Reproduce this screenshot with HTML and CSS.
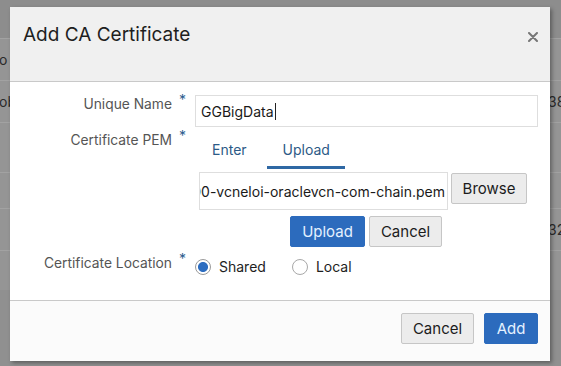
FILE: index.html
```html
<!DOCTYPE html>
<html lang="en">
<head>
  <meta charset="UTF-8" />
  <title>Add CA Certificate</title>
  <link rel="stylesheet" href="styles.css">
</head>
<body>

<!-- table behind the overlay -->
<div class="backdrop">
  <div class="bg-head"></div>
  <div class="bg-row r1"><span class="cell-l">o</span><span class="cell-r white"></span></div>
  <div class="bg-row r2"><span class="cell-l">ob</span><span class="cell-r">38</span></div>
  <div class="bg-row r3"><span class="cell-l"></span><span class="cell-r"></span></div>
  <div class="bg-row r4"><span class="cell-l"></span><span class="cell-r"></span></div>
  <div class="bg-row r5"><span class="cell-l"></span><span class="cell-r">32</span></div>
  <div class="bg-row r6"><span class="cell-l"></span><span class="cell-r"></span></div>
</div>

<!-- DIALOG -->
<div class="dialog">
  <div class="dlg-head">
    <h1 class="dlg-title">Add CA Certificate</h1>
    <svg class="close" width="10" height="10" viewBox="0 0 10 10">
      <path d="M1 1L9 9M9 1L1 9" stroke="#767676" stroke-width="2" stroke-linecap="round"/>
    </svg>
  </div>

  <div class="dlg-body">
    <div class="form">
      <label class="lbl">Unique Name<span class="req">*</span></label>
      <div class="field"><span class="input-val">GGBigData</span><span class="caret"></span></div>

      <label class="lbl">Certificate PEM<span class="req">*</span></label>
      <div class="pem">
        <div class="tabs">
          <span class="tab first">Enter</span>
          <span class="tab active">Upload</span>
        </div>
        <div class="file-row">
          <div class="file-name"><span>00-vcneloi-oraclevcn-com-chain.pem</span></div>
          <button class="btn">Browse</button>
        </div>
        <div class="upload-actions">
          <button class="btn primary">Upload</button>
          <button class="btn">Cancel</button>
        </div>
      </div>

      <label class="lbl loc">Certificate Location<span class="req">*</span></label>
      <div class="radios">
        <span class="radio-opt"><span class="radio on"></span>Shared</span>
        <span class="radio-opt"><span class="radio"></span>Local</span>
      </div>
    </div>
  </div>

  <div class="dlg-foot">
    <button class="btn foot-cancel">Cancel</button>
    <button class="btn primary foot-add">Add</button>
  </div>
</div>

</body>
</html>
```

FILE: styles.css
```css
*{box-sizing:border-box}

body {
  margin:0;
  height:366px;
  overflow:hidden;
  position:relative;
  background:#909090;
  font-family:Inter,'Liberation Sans',sans-serif;
  color:#222;
}

/* background table */
.backdrop {display:flex;flex-direction:column}
.bg-head {height:38px;background:#8d8d8d}
.bg-row {
  display:flex;
  justify-content:space-between;
  border-top:1px solid #a2a2a2;
  background:#959595;
  font-size:14px;
  color:#2a2a2a;
}
.cell-l {width:12px;overflow:hidden;margin-left:-1px}
.cell-r {width:13px;overflow:hidden;white-space:nowrap}
.cell-r.white {background:#fff}
.r1 {height:42px;align-items:center}
.r2 {height:42px;align-items:center}
.r3 {height:50px}
.r4 {height:36px}
.r5 {height:42px;align-items:center}
.r6 {height:40px}

/* dialog */
.dialog {
  position:absolute;
  left:10px;
  top:7px;
  width:540px;
  height:354px;
  display:flex;
  flex-direction:column;
  background:#fff;
  box-shadow:2px 2px 4px rgba(0,0,0,.35);
}

.dlg-head {
  height:75px;
  flex:none;
  background:#f0f0f0;
  border-bottom:1px solid #c9c9c9;
  display:flex;
  align-items:flex-start;
  justify-content:space-between;
  padding:0 12px 0 13px;
}

.dlg-title {
  margin:16px 0 0;
  font-size:19px;
  font-weight:400;
  line-height:24px;
  color:#1e1e1e;
}

.close {margin-top:25px}

.dlg-body {flex:1;padding:13px 12px 0 0}

.form {
  display:grid;
  grid-template-columns:176px 1fr;
  column-gap:9px;
  row-gap:4px;
  align-items:start;
}

.lbl {
  display:flex;
  justify-content:flex-end;
  font-size:13.8px;
  line-height:18px;
  color:#555;
}

.req {
  color:#2b5c8e;
  font-size:14px;
  margin-left:7px;
  position:relative;
  top:-4px;
}

.field {
  height:32px;
  border:1px solid #dedede;
  display:flex;
  align-items:center;
  padding-left:5px;
  font-size:14px;
  color:#1a1a1a;
}
.caret {width:1px;height:17px;background:#222;margin-left:1px}

.tabs {display:flex}
.tab {
  padding:10px 15px 7px 16px;
  font-size:14px;
  line-height:18px;
  color:#2c5a86;
  border-bottom:3px solid transparent;
}
.tab.first {padding-left:17px;padding-right:20px}
.tab.active {border-bottom-color:#2f68a4}

.file-row {
  display:flex;
  align-items:flex-start;
  gap:3px;
  margin:3px 0 0 4px;
}

.file-name {
  width:249px;
  height:38px;
  border:1px solid #dedede;
  display:flex;
  align-items:center;
  justify-content:flex-end;
  overflow:hidden;
  padding-right:2px;
  font-size:14px;
  color:#1a1a1a;
  white-space:nowrap;
}

.btn {
  height:31px;
  padding:0;
  border:1px solid #c6c6c6;
  border-radius:2px;
  background:#ececec;
  font-family:inherit;
  font-size:15px;
  color:#1c1c1c;
  cursor:pointer;
}
.file-row .btn {margin-top:1px;width:76px}

.btn.primary {
  background:#2c6bbd;
  border-color:#2c6bbd;
  color:#e4f1ff;
}

.upload-actions {
  display:flex;
  gap:4px;
  margin:6px 0 0 95px;
}
.upload-actions .btn {width:75px}
.upload-actions .btn + .btn {width:73px}

.lbl.loc {margin-top:3px}

.radios {
  display:flex;
  gap:26px;
  padding-top:7px;
  font-size:14px;
  line-height:18px;
  color:#1e1e1e;
}
.radio-opt {display:flex;align-items:center;gap:8px}
.radio {
  width:16px;height:16px;
  border-radius:50%;
  border:1px solid #a8a8a8;
  background:#fff;
}
.radio.on {
  border-color:#9a9a9a;
  background:radial-gradient(circle,#2d6dc0 0 4.6px,#fff 5.4px);
}

.dlg-foot {
  height:61px;
  flex:none;
  border-top:1px solid #c9c9c9;
  background:#fbfbfb;
  display:flex;
  justify-content:flex-end;
  align-items:flex-start;
  gap:10px;
  padding:12px 12px 0 0;
}
.foot-cancel {width:73px}
.foot-add {width:54px}
```
